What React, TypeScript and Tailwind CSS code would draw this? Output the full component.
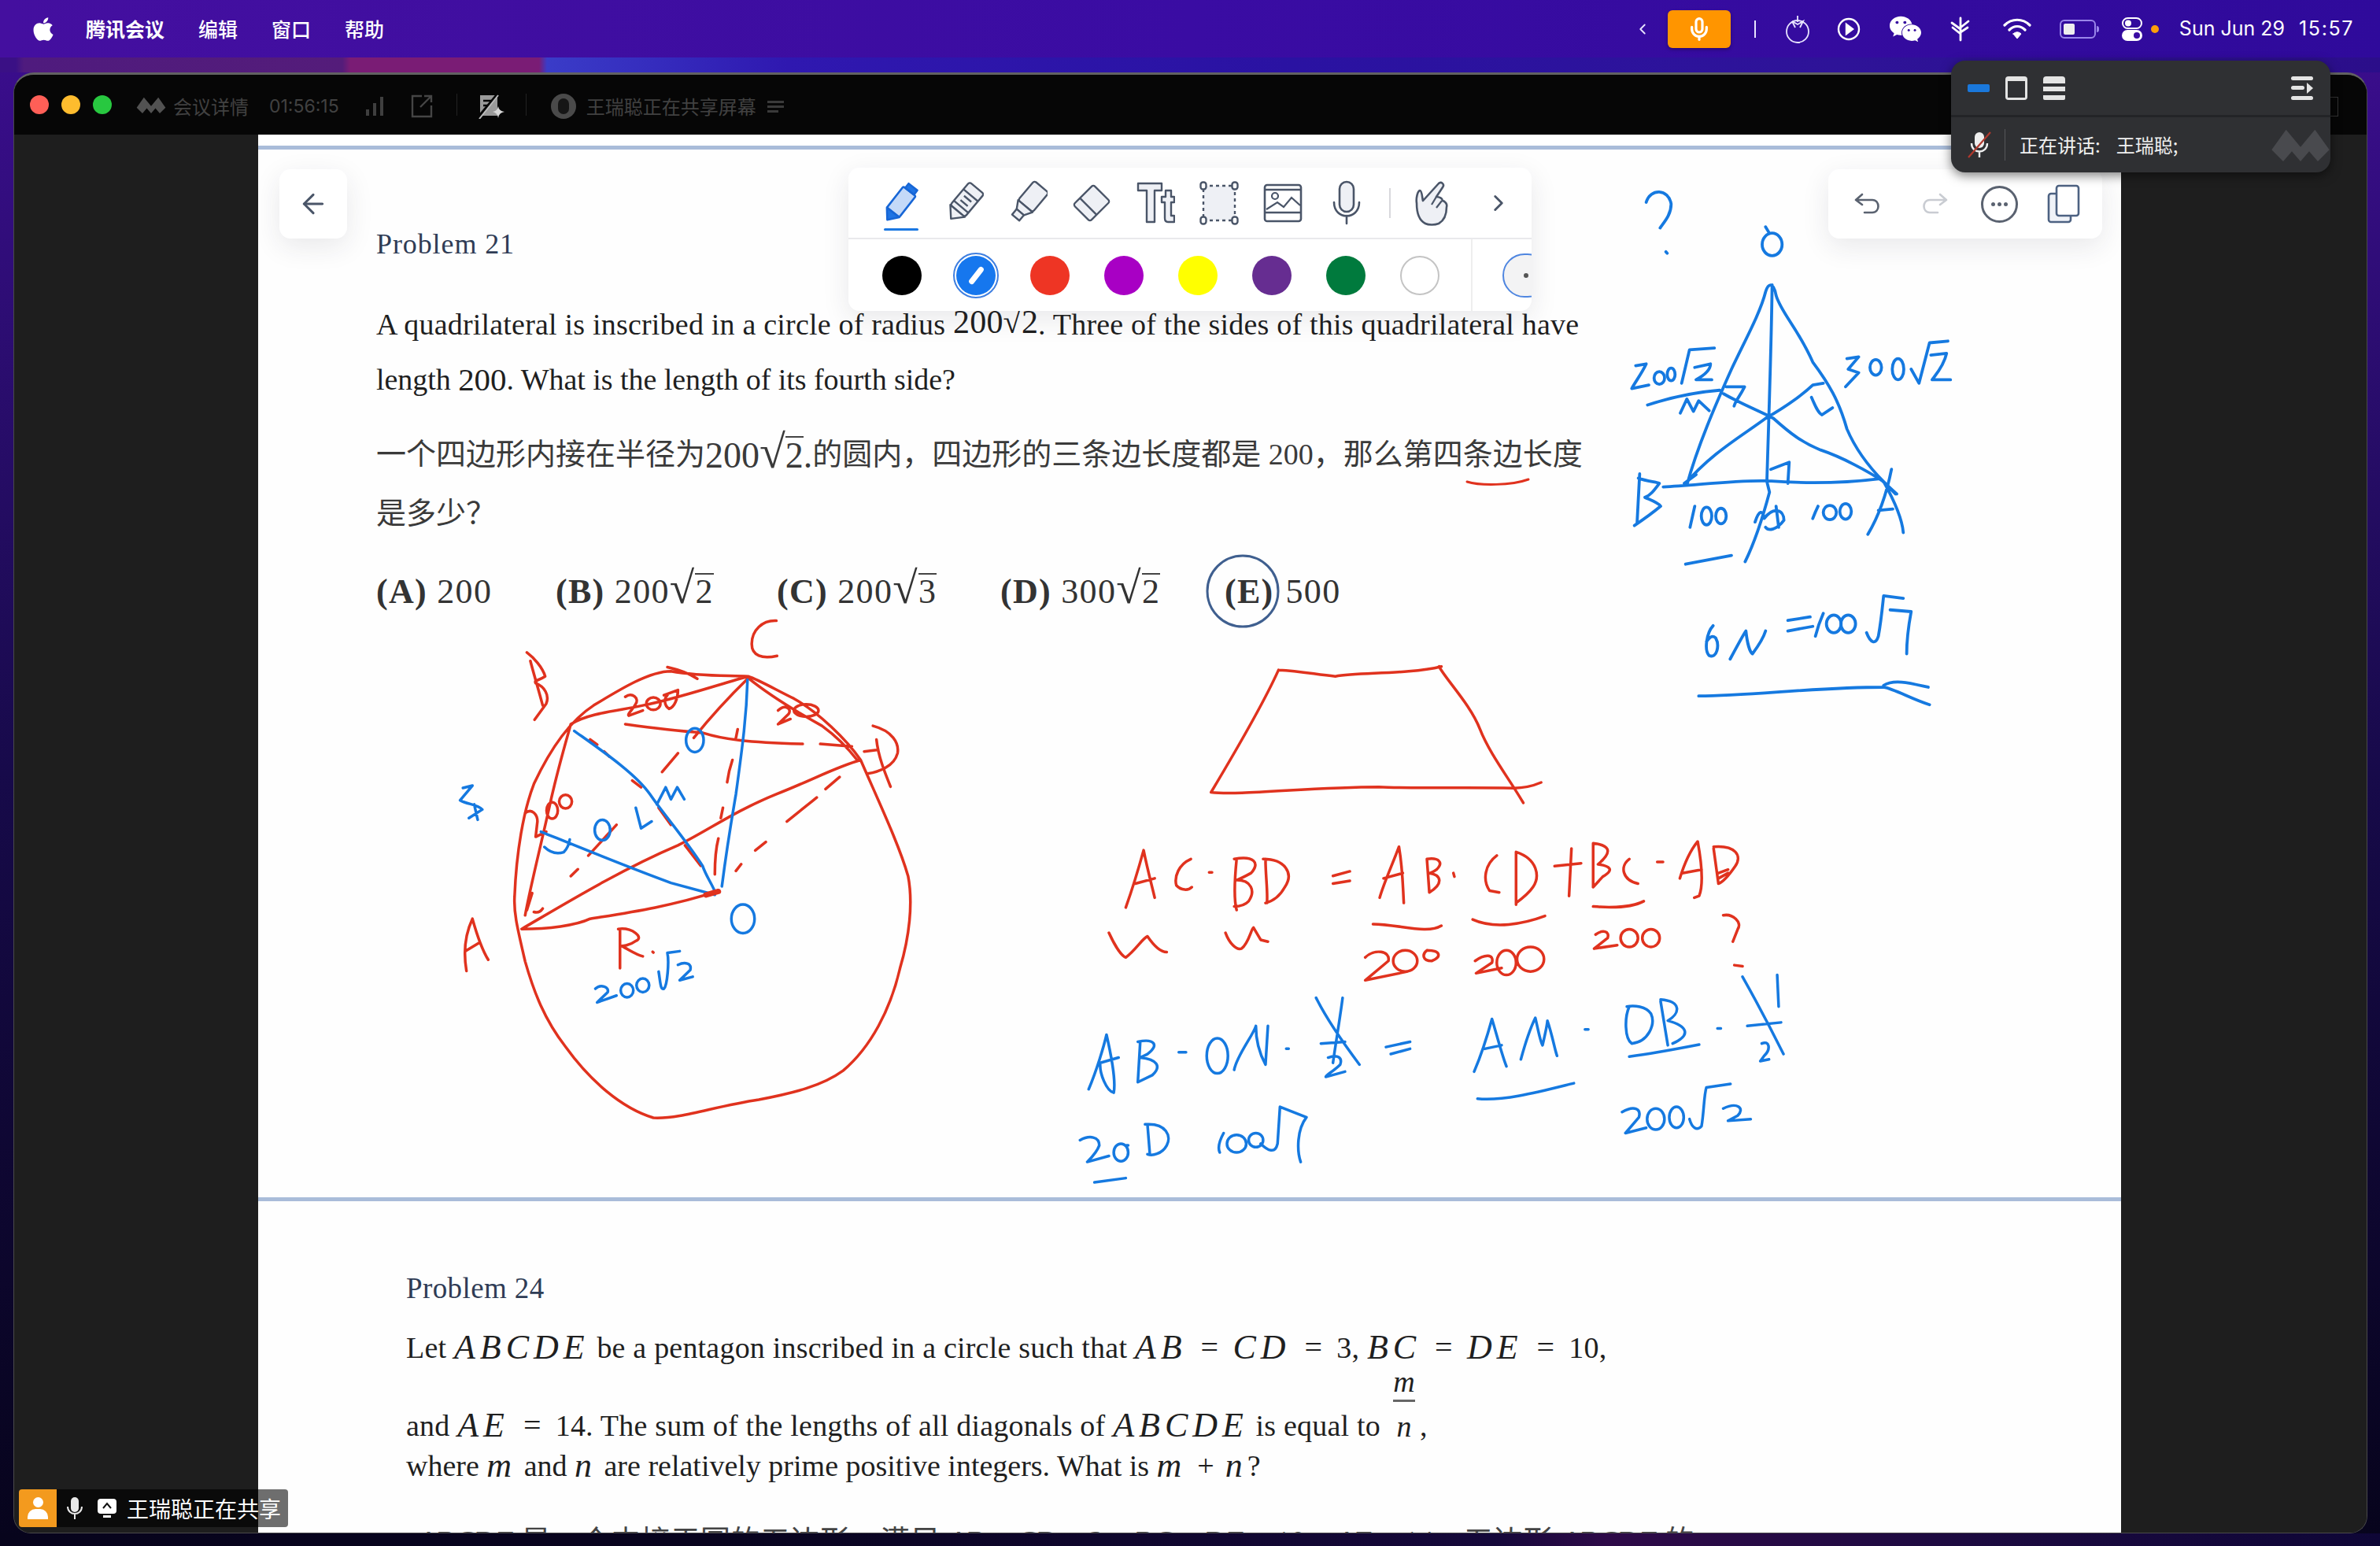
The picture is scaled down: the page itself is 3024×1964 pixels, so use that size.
import React from "react";
import { FaApple, FaWeixin } from "react-icons/fa";
import { Mic, ChevronLeft, ChevronRight, ArrowLeft } from "lucide-react";

const e = (cx: number, cy: number, rx: number, ry: number) =>
  `M${cx - rx} ${cy} A${rx} ${ry} 0 1 1 ${cx + rx} ${cy} A${rx} ${ry} 0 1 1 ${cx - rx} ${cy} `;

const RED = "#e0321e";
const BLUE = "#1579e0";

function Ink({ d, color, w = 3.5 }: { d: string; color: string; w?: number }) {
  return (
    <path
      d={d}
      fill="none"
      stroke={color}
      strokeWidth={w}
      strokeLinecap="round"
      strokeLinejoin="round"
      vectorEffect="non-scaling-stroke"
    />
  );
}

const circleRed =
  "M920 185 C850 182 780 185 700 170 C640 170 560 220 480 270 C420 310 360 390 310 500 C280 580 260 700 255 830 C252 880 265 930 285 1020 C310 1110 340 1190 400 1270 C470 1370 560 1450 650 1478 C730 1482 820 1445 950 1425 C1050 1405 1130 1385 1190 1340 C1270 1270 1325 1160 1352 1040 C1378 950 1390 850 1375 770 C1350 680 1295 560 1240 430 C1200 370 1120 290 1050 250 C1000 225 950 195 920 185 " +
  "M690 158 C720 165 750 175 775 192 " +
  "M275 925 C350 925 430 915 470 895 C560 880 700 860 830 815 " +
  "M275 925 C400 850 560 750 720 680 C800 640 880 580 1000 530 C1100 490 1170 450 1240 430 " +
  "M285 885 C300 800 330 680 360 540 C380 450 400 380 415 325 " +
  "M415 325 C470 290 560 285 620 270 C700 255 800 220 920 185 " +
  "M920 190 C980 240 1060 290 1130 330 C1170 360 1200 390 1230 430 " +
  "M570 325 C640 335 720 345 790 350 C850 370 920 378 1075 383 M1125 383 L1215 390 M1250 405 L1290 400 " +
  "M920 190 C860 250 800 320 765 365 M720 410 L675 465 M890 340 L885 365 M875 430 C865 460 862 480 860 495 M848 570 L842 600 M835 660 C825 700 825 740 825 765 M885 755 L900 735 M940 695 L970 670 M1030 610 L1115 540 M1140 515 L1180 480 M415 770 L435 750 M465 710 L545 620 M470 370 L490 385 M510 405 L525 420 M590 490 L615 510 M665 570 L700 620 M740 680 L785 740 M305 820 L290 870 M310 875 Q325 880 335 865 " +
  "M290 115 C310 130 335 160 342 185 C320 200 310 195 315 205 C340 215 355 240 345 265 L312 312 M300 140 C310 180 325 230 335 270 " +
  "M1000 22 C960 20 930 50 930 90 C930 125 960 135 1002 125 " +
  "M1275 330 C1330 345 1350 380 1345 410 C1335 450 1290 465 1260 470 M1285 370 C1290 420 1310 470 1325 508 " +
  "M118 1048 C110 1000 110 950 135 895 C150 950 165 990 180 1015 M115 990 L155 965 " +
  "M555 925 L555 1040 M550 925 C590 920 625 950 600 960 C580 975 560 975 560 975 C580 985 600 1000 620 1005 M648 992 L650 994 " +
  "M285 585 C305 570 320 590 320 610 L315 655 L345 640 " + e(362, 578, 16, 24) + e(400, 552, 18, 20) +
  "M570 245 C590 230 610 250 600 265 C590 285 575 295 580 300 L620 285 " + e(650, 265, 20, 18) +
  "M680 240 L720 225 C720 250 710 275 695 280 C680 270 680 250 690 240 " +
  "M1005 285 C1025 265 1045 280 1035 295 L1005 325 L1040 310 " + e(1085, 285, 35, 18);

const circleBlue =
  "M108 512 L135 505 L100 548 C120 560 150 560 163 575 L125 600 M140 560 L150 605 " +
  "M425 345 C500 400 600 470 640 530 C680 590 740 660 790 740 C800 770 815 790 825 815 " +
  "M918 195 C915 300 905 380 885 530 C870 620 855 720 845 800 " +
  "M330 640 C450 690 580 745 700 790 L825 825 " +
  "M340 685 C360 705 380 705 395 700 C405 690 410 675 412 663 " +
  e(505, 635, 22, 30) + e(768, 372, 25, 35) +
  "M600 570 L615 630 L645 610 M660 560 L685 510 L700 545 L718 510 L738 545 " +
  e(905, 895, 33, 42) +
  "M485 1100 C500 1085 525 1095 520 1110 L490 1140 L545 1120 " + e(575, 1105, 18, 20) + e(620, 1090, 18, 20) +
  "M665 1050 C670 1080 670 1105 680 1100 C690 1090 695 1020 690 995 L725 990 " +
  "M720 1030 C740 1020 760 1025 755 1045 L725 1075 L762 1065";

const eqRed =
  "M432 72 C480 75 510 85 550 90 C600 78 700 85 770 62 M765 62 C780 100 830 170 850 240 C870 310 910 380 940 450 M432 72 C400 170 340 310 292 420 M292 420 C350 430 500 405 640 405 C700 410 800 405 920 408 C940 408 960 402 977 392 " +
  "M115 748 C130 690 145 620 152 585 C160 640 170 690 175 720 M135 680 L175 665 " +
  "M250 610 C225 625 215 660 220 685 C230 700 245 700 252 690 M288 648 L294 648 " +
  "M345 610 C340 680 340 730 345 755 M340 610 C380 600 395 620 375 650 C355 665 345 670 345 670 C375 670 385 700 370 730 C360 745 345 745 340 745 " +
  "M405 610 C405 660 410 700 408 735 M400 610 C445 610 465 650 445 690 C435 715 420 730 405 735 " +
  "M545 658 L580 645 M545 680 L580 672 " +
  "M642 720 C650 680 670 620 682 575 C690 640 690 690 692 735 M650 665 L690 650 " +
  "M740 610 L745 705 M740 610 C765 605 775 620 760 640 C750 650 745 650 745 650 C770 655 775 680 745 705 M795 650 L797 660 " +
  "M885 600 C860 625 855 670 870 700 L890 705 M925 590 C925 650 925 700 925 740 M925 590 C970 610 975 660 960 690 C950 710 935 725 925 735 " +
  "M1005 630 L1060 622 M1040 580 L1035 715 " +
  "M1085 565 L1085 690 M1085 565 C1115 570 1130 585 1095 625 C1120 630 1130 640 1105 660 L1085 690 M1160 610 C1140 630 1145 670 1178 680 M1218 618 L1230 618 " +
  "M1265 665 C1275 620 1290 580 1302 560 C1310 620 1315 680 1305 715 L1295 720 M1270 650 L1310 640 " +
  "M1335 580 L1345 680 M1335 575 C1380 570 1395 600 1380 630 C1370 650 1355 675 1345 680 M1345 650 L1365 640 M1345 665 L1365 650 " +
  "M628 795 C680 795 740 825 770 800 M835 782 C880 810 940 795 985 772 M1085 745 C1130 750 1170 745 1190 730 " +
  "M80 820 C90 850 105 885 115 890 C135 870 150 835 160 830 C170 850 185 875 200 875 M322 820 C330 850 345 870 355 865 C370 850 375 810 380 805 L395 840 L410 845 " +
  "M612 890 C630 865 665 870 660 900 L612 955 L700 930 " + e(695, 900, 25, 30) + "M740 870 C770 870 770 890 750 900 C730 900 730 880 740 870 " +
  "M840 900 C860 880 880 880 875 905 L842 935 L895 920 " + e(905, 905, 20, 35) + e(955, 895, 28, 35) +
  "M1090 825 C1105 810 1120 815 1115 835 L1087 865 L1135 855 " + e(1160, 835, 18, 25) + e(1205, 835, 18, 25) +
  "M1355 770 C1375 765 1395 790 1385 810 L1375 845 M1378 912 L1395 915";

const eqBlue =
  "M38 1265 C55 1210 70 1140 75 1110 C85 1170 95 1240 90 1275 C75 1270 60 1220 62 1190 L100 1175 " +
  "M145 1130 L140 1245 M140 1130 C175 1120 185 1140 160 1165 L145 1175 C180 1180 190 1200 170 1225 L140 1245 M225 1160 L240 1160 " +
  e(305, 1170, 22, 50) + "M340 1210 C345 1170 380 1110 385 1085 C385 1130 395 1170 405 1195 L410 1085 M448 1150 L453 1150 " +
  "M510 1005 C530 1060 570 1140 600 1195 M565 1005 C560 1060 550 1140 545 1190 M520 1135 L570 1130 M535 1175 C555 1165 565 1175 560 1195 C545 1215 530 1225 530 1230 L570 1215 " +
  "M655 1145 L705 1130 M665 1165 L705 1150 " +
  "M838 1215 C855 1160 870 1090 875 1065 C885 1110 895 1165 905 1200 M860 1150 L895 1140 " +
  "M935 1180 C945 1130 955 1090 965 1062 C970 1090 975 1130 980 1140 C985 1110 990 1080 990 1070 C1000 1110 1005 1150 1010 1170 M1068 1095 L1075 1095 " +
  "M845 1292 C900 1300 980 1270 1045 1248 " +
  "M1160 1030 C1150 1060 1150 1120 1165 1135 C1200 1130 1215 1080 1205 1050 C1195 1030 1170 1025 1155 1030 " +
  "M1225 1015 L1240 1140 M1225 1010 C1270 1015 1265 1050 1240 1070 C1280 1085 1290 1110 1250 1135 M1160 1172 C1200 1165 1260 1150 1305 1138 M1343 1092 L1350 1092 " +
  "M1467 940 L1470 1030 M1405 1085 L1475 1075 M1395 945 C1430 1030 1460 1110 1480 1165 M1435 1135 C1450 1125 1455 1150 1440 1170 L1432 1185 L1450 1180 " +
  "M20 1410 C40 1395 60 1400 60 1425 C55 1445 40 1465 35 1472 L80 1455 " + e(105, 1445, 15, 25) + "M116 1425 L120 1425 " +
  "M160 1365 L165 1450 M155 1365 C200 1360 210 1400 200 1425 C190 1450 170 1455 160 1450 M50 1530 L115 1518 " +
  "M318 1390 C310 1410 305 1430 310 1445 " + e(345, 1420, 20, 25) + e(385, 1410, 15, 20) +
  "M395 1420 C410 1440 425 1450 430 1420 L435 1315 L490 1345 C470 1380 470 1440 478 1472 " +
  "M1145 1330 C1170 1310 1185 1320 1180 1345 L1152 1390 L1195 1375 " + e(1215, 1350, 18, 30) + e(1258, 1345, 15, 30) +
  "M1285 1350 C1290 1375 1300 1385 1310 1370 C1315 1330 1315 1280 1320 1260 L1370 1250 M1355 1320 C1385 1300 1400 1320 1385 1340 L1365 1355 L1412 1350";

const triBlue =
  "M155 85 C170 45 240 45 250 90 C250 120 225 140 208 158 M230 226 L235 230 " +
  e(635, 205, 38, 32) + "M610 155 L622 170 " +
  "M310 890 C350 780 420 660 480 560 C530 480 590 400 610 340 C620 315 640 310 650 350 C670 400 730 440 790 540 C850 600 890 650 920 730 C960 800 1020 850 1060 880 C1090 920 1130 980 1135 1025 " +
  "M220 895 C350 890 500 875 620 878 C750 885 900 885 1040 872 " +
  "M635 320 C632 500 622 700 615 880 L625 910 C600 980 570 1050 532 1108 " +
  "M450 630 C520 660 590 680 640 700 C700 740 750 770 820 790 C900 810 1000 850 1060 880 C1080 895 1095 905 1110 915 " +
  "M300 890 C400 800 520 750 610 700 C680 670 740 640 790 605 L830 600 M300 885 L345 860 " +
  "M460 610 L530 610 C510 640 495 650 490 665 M785 640 C800 665 810 685 825 690 L865 670 M630 845 L700 825 L695 885 " +
  "M115 550 L155 545 C140 570 110 600 100 615 L165 605 " + e(205, 585, 20, 18) + e(250, 575, 15, 18) +
  "M290 600 L320 505 L415 500 M340 555 L400 545 C400 565 370 580 345 590 L405 590 M160 662 C250 640 350 625 435 620 M285 685 L310 645 L335 680 L355 650 L395 678 " +
  "M920 530 L965 525 L925 560 L965 570 L915 610 " + e(1030, 555, 22, 22) + e(1115, 560, 22, 30) +
  "M1165 560 L1195 600 L1235 485 L1305 480 M1240 520 L1300 515 C1290 550 1260 575 1245 590 L1315 590 " +
  "M130 858 L120 1000 M125 870 C160 880 190 880 205 885 C185 905 170 920 150 925 C180 935 200 940 210 950 C170 975 140 990 110 1005 " +
  "M1000 1030 C1040 980 1070 920 1090 845 M1040 962 L1095 958 M1045 870 L1105 915 " +
  "M340 950 L322 1010 " + e(385, 978, 20, 25) + e(440, 978, 20, 22) +
  "M810 950 C800 965 795 975 790 985 " + e(855, 968, 25, 20) + e(915, 965, 22, 22) +
  "M570 995 C585 960 600 960 605 985 C640 950 680 960 680 990 C650 1020 620 1020 610 1010 M650 950 L660 1010 M305 1115 L480 1090 " +
  "M410 1290 C385 1310 375 1360 395 1375 C425 1385 435 1345 420 1325 C405 1315 395 1325 385 1335 " +
  "M475 1385 C500 1350 530 1310 535 1305 C540 1340 550 1365 560 1370 C580 1350 600 1330 610 1305 " +
  "M695 1275 L780 1265 M695 1305 L790 1292 M830 1255 C815 1280 805 1305 800 1320 " + e(870, 1285, 28, 25) + e(925, 1285, 28, 25) +
  "M995 1310 C1010 1340 1030 1345 1040 1320 C1050 1280 1055 1240 1060 1205 L1135 1212 M1085 1245 L1165 1250 C1155 1290 1148 1330 1148 1370 " +
  "M355 1490 C550 1490 800 1465 1060 1465 C1100 1470 1170 1500 1235 1515 M1060 1460 C1100 1440 1170 1455 1230 1465";

function Annotations() {
  return (
    <svg className="absolute inset-0 w-full h-full pointer-events-none" viewBox="328 172 2367 1776">
      <g transform="translate(540 780) scale(0.4464 0.4337)">
        <Ink d={circleRed} color={RED} />
        <Ink d={circleBlue} color={BLUE} />
        <Ink d="M800 825 L835 815" color={RED} w={7} />
      </g>
      <g transform="translate(1360 820) scale(0.6122 0.4464)">
        <Ink d={eqRed} color={RED} />
        <Ink d={eqBlue} color={BLUE} />
      </g>
      <g transform="translate(2040 220) scale(0.3333 0.4464)">
        <Ink d={triBlue} color={BLUE} w={3.8} />
      </g>
      <path d="M1864 613 C1880 618 1920 618 1942 610" fill="none" stroke={RED} strokeWidth="3" strokeLinecap="round" />
      <circle cx="1579" cy="752" r="45" fill="none" stroke="#3f5f8f" strokeWidth="3" />
    </svg>
  );
}

function Sqrt({ n, bar = true }: { n: string; bar?: boolean }) {
  return (
    <span className="inline-flex items-baseline">
      <span className={bar ? "text-[1.3em] leading-none" : ""}>√</span>
      <span className={bar ? "border-t-2 border-[#444] leading-[1.02em]" : ""}>{n}</span>
    </span>
  );
}

const V = ({ children }: { children: React.ReactNode }) => <i className="text-[44px] tracking-[6px] leading-none">{children}</i>;
const Eq = () => <span className="mx-[18px] text-[40px] leading-none">=</span>;

function TitleLogo({ className, fill }: { className: string; fill: string }) {
  return (
    <svg viewBox="0 0 40 24" className={className}>
      <path d="M0 16 L10 2 L20 14 L30 2 L40 16 L32 24 L26 17 L20 24 L14 17 L8 24 Z" fill={fill} />
    </svg>
  );
}

const G = "#4a5568";
const IC = "#eef0f5";

function ToolPen() {
  return (
    <svg width="50" height="60" viewBox="0 0 50 60">
      <g transform="rotate(38 25 30)" stroke="#1766d6" strokeWidth="2.6" fill="#c4d9f8" strokeLinejoin="round">
        <rect x="15" y="11" width="20" height="34" rx="2" />
        <path d="M18 4 h14 v7 h-14z" fill="#1f74e4" />
        <path d="M15 45 h20 l-10 12z" fill="#1f74e4" />
      </g>
    </svg>
  );
}
function ToolMarker() {
  return (
    <svg width="50" height="60" viewBox="0 0 50 60">
      <g transform="rotate(40 25 30)" stroke={G} strokeWidth="2.4" fill={IC} strokeLinejoin="round">
        <rect x="13" y="5" width="24" height="38" rx="3" />
        <path d="M13 17h24M19 23h12M19 30h12M13 36h24" fill="none" />
        <path d="M13 43 h24 l-12 13z" />
      </g>
    </svg>
  );
}
function ToolHighlighter() {
  return (
    <svg width="50" height="60" viewBox="0 0 50 60">
      <g transform="rotate(40 25 30)" stroke={G} strokeWidth="2.4" fill={IC} strokeLinejoin="round">
        <rect x="13" y="3" width="24" height="32" rx="3" />
        <path d="M13 35 h24 l-6 10 h-12z" />
        <path d="M19 45 h12 v9 h-12z" />
      </g>
    </svg>
  );
}
function ToolEraser() {
  return (
    <svg width="50" height="60" viewBox="0 0 50 60">
      <g transform="rotate(45 25 30)" stroke={G} strokeWidth="2.4" fill={IC} strokeLinejoin="round">
        <rect x="10" y="12" width="30" height="36" rx="3" />
        <path d="M10 36h30" fill="none" />
      </g>
    </svg>
  );
}
function ToolText() {
  return (
    <svg width="50" height="60" viewBox="0 0 50 60">
      <g stroke={G} strokeWidth="2.4" fill={IC} strokeLinejoin="round">
        <path d="M3 5 h30 v9 h-9 v40 h-10 v-40 h-11z" />
        <path d="M33 22 h5 v-8 h7 v8 h4 v7 h-4 v17 h4 v8 h-8 q-4 0 -4 -5 v-20 h-4z" />
      </g>
    </svg>
  );
}
function ToolSelect() {
  return (
    <svg width="50" height="60" viewBox="0 0 50 60">
      <rect x="5" y="8" width="40" height="44" fill={IC} stroke={G} strokeWidth="2.4" strokeDasharray="4 4" />
      {[[5, 8], [45, 8], [5, 52], [45, 52]].map(([x, y]) => (
        <rect key={`${x}-${y}`} x={x - 3.5} y={y - 4.5} width="7" height="9" rx="3" fill="#fff" stroke={G} strokeWidth="2.4" />
      ))}
    </svg>
  );
}
function ToolImage() {
  return (
    <svg width="50" height="60" viewBox="0 0 50 60">
      <rect x="2" y="7" width="46" height="46" rx="3" fill="#fff" stroke={G} strokeWidth="2.6" />
      <path d="M2 13h46M2 42h46" stroke={G} strokeWidth="2.4" fill="none" />
      <circle cx="15" cy="21" r="4" fill="none" stroke={G} strokeWidth="2.2" />
      <path d="M4 38 L18 29 L26 35 L36 23 L47 33" fill="none" stroke={G} strokeWidth="2.2" />
    </svg>
  );
}
function ToolMic() {
  return (
    <svg width="50" height="60" viewBox="0 0 50 60">
      <rect x="16" y="3" width="18" height="38" rx="9" fill={IC} stroke={G} strokeWidth="2.6" />
      <path d="M9 29 C9 52 41 52 41 29 M25 46 V56" fill="none" stroke={G} strokeWidth="2.6" strokeLinecap="round" />
    </svg>
  );
}
function ToolHand() {
  return (
    <svg width="50" height="60" viewBox="0 0 50 60">
      <path
        d="M16 56 C8 52 5 42 5 30 C4 24 6 15 9 14 C12 14 12 24 13 27 L33 5 C36 2 41 6 38 10 L30 22 C34 22 38 24 38 27 C42 28 44 32 43 35 C43 44 40 52 33 56 C28 58 20 58 16 56 Z"
        fill={IC}
        stroke={G}
        strokeWidth="2.6"
        strokeLinejoin="round"
      />
      <path d="M24 32 L30 22 M30 36 L37 27" fill="none" stroke={G} strokeWidth="2.2" />
    </svg>
  );
}

function ColorDot({ color, ring }: { color: string; ring?: boolean }) {
  return <div className={`w-[50px] h-[50px] rounded-full shrink-0 ${color} ${ring ? "border-2 border-[#c4c4c4]" : ""}`} />;
}

function DrawToolbar() {
  return (
    <div className="absolute left-[1078px] top-[213px] w-[868px] h-[182px] rounded-[14px] bg-white shadow-[0_10px_34px_rgba(40,40,60,0.10)] overflow-hidden z-10">
      <div className="h-[91px] flex items-center pl-[41px] border-b-2 border-[#e9e9ec] relative">
        <div className="flex items-center gap-[31px]">
          <ToolPen />
          <ToolMarker />
          <ToolHighlighter />
          <ToolEraser />
          <ToolText />
          <ToolSelect />
          <ToolImage />
          <ToolMic />
        </div>
        <div className="w-[2px] h-[38px] bg-[#d8d8dc] ml-[29px]" />
        <div className="ml-[28px]">
          <ToolHand />
        </div>
        <ChevronRight size={34} strokeWidth={2} className="ml-[42px] text-[#4a5568]" />
        <div className="absolute left-[45px] top-[77px] w-[44px] h-[3px] rounded-full bg-[#1b78e2]" />
      </div>
      <div className="h-[91px] flex items-center pl-[43px] gap-[44px]">
        <ColorDot color="bg-black" />
        <div className="w-[50px] h-[50px] shrink-0 rounded-full bg-[#1677ee] flex items-center justify-center outline-2 outline-offset-[2px] outline-[#3f7fe0]">
          <div className="w-[7px] h-[26px] rounded-full bg-white rotate-[38deg]" />
        </div>
        <ColorDot color="bg-[#ee3524]" />
        <ColorDot color="bg-[#a800c4]" />
        <ColorDot color="bg-[#ffff00]" />
        <ColorDot color="bg-[#662d91]" />
        <ColorDot color="bg-[#007a3d]" />
        <ColorDot color="bg-white" ring />
        <div className="w-[2px] h-[91px] bg-[#eeeeee] shrink-0 -ml-[4px]" />
        <div className="w-[60px] h-[56px] -ml-[6px] shrink-0 rounded-full bg-[#f3f3f4] border-2 border-[#4f86e0] flex items-center justify-center">
          <div className="w-[6px] h-[6px] rounded-full bg-[#555]" />
        </div>
      </div>
    </div>
  );
}

function RightToolbar() {
  return (
    <div className="absolute left-[2323px] top-[215px] w-[348px] h-[88px] rounded-[14px] bg-white shadow-[0_10px_34px_rgba(40,40,60,0.10)] z-10 flex items-center pl-[32px]">
      <svg width="36" height="30" viewBox="0 0 36 30" fill="none" stroke="#5a6270" strokeWidth="2.6" strokeLinecap="round" strokeLinejoin="round">
        <path d="M11 3 L3 10 L11 16 M3 10 H24 C34 10 34 26 24 26 H14" />
      </svg>
      <svg className="ml-[49px]" width="36" height="30" viewBox="0 0 36 30" fill="none" stroke="#c9ccd2" strokeWidth="2.6" strokeLinecap="round" strokeLinejoin="round">
        <path d="M25 3 L33 10 L25 16 M33 10 H12 C2 10 2 26 12 26 H22" />
      </svg>
      <div className="ml-[41px] w-[47px] h-[47px] rounded-full border-[3px] border-[#5a6270] flex items-center justify-center gap-[3px]">
        <i className="w-[5px] h-[5px] rounded-full bg-[#5a6270]" />
        <i className="w-[5px] h-[5px] rounded-full bg-[#5a6270]" />
        <i className="w-[5px] h-[5px] rounded-full bg-[#5a6270]" />
      </div>
      <svg className="ml-[37px]" width="42" height="50" viewBox="0 0 42 50" fill="#f0f3f8" stroke="#4d6282" strokeWidth="2.6" strokeLinejoin="round">
        <rect x="2" y="12" width="28" height="36" rx="3" />
        <rect x="12" y="2" width="28" height="38" rx="3" fill="#fff" />
      </svg>
    </div>
  );
}

function Popover() {
  return (
    <div className="absolute left-[2479px] top-[77px] w-[482px] h-[142px] rounded-[18px] bg-[#2f3033] shadow-[0_4px_14px_rgba(0,0,0,0.5)] z-20 overflow-hidden">
      <div className="h-[72px] border-b-[3px] border-[#232427] flex items-center pl-[21px] pr-[22px]">
        <div className="w-[28px] h-[10px] rounded-[2px] bg-[#1a78dc]" />
        <div className="ml-[20px] w-[28px] h-[30px] rounded-[4px] bg-[#e4e4e4] pt-[6px] px-[3px] pb-[3px]">
          <div className="w-full h-full bg-[#2f3033]" />
        </div>
        <div className="ml-[20px] w-[28px] h-[30px] flex flex-col justify-between">
          <div className="h-[9px] rounded-t-[4px] bg-[#e4e4e4]" />
          <div className="h-[6px] bg-[#e4e4e4]" />
          <div className="h-[6px] rounded-b-[2px] bg-[#e4e4e4]" />
        </div>
        <div className="ml-auto w-[28px] h-[30px] flex flex-col justify-between relative">
          <div className="h-[5px] rounded bg-[#e4e4e4]" />
          <div className="h-[5px] w-[17px] rounded bg-[#e4e4e4]" />
          <div className="h-[5px] rounded bg-[#e4e4e4]" />
          <div className="absolute right-0 top-[8px] w-0 h-0 border-y-[7px] border-y-transparent border-l-[8px] border-l-[#e4e4e4]" />
        </div>
      </div>
      <div className="h-[70px] flex items-center relative">
        <svg className="ml-[20px]" width="32" height="34" viewBox="0 0 32 34">
          <rect x="10" y="1" width="12" height="20" rx="6" fill="#eee" />
          <path d="M6 15 C6 29 26 29 26 15 M16 25 V33" fill="none" stroke="#eee" strokeWidth="2.4" />
          <path d="M2 33 L30 1" stroke="#b0392e" strokeWidth="2.2" />
        </svg>
        <div className="ml-[16px] w-[1px] h-[40px] bg-[#55565a]" />
        <span className="ml-[18px] text-[24px] text-[#f0f0f0] whitespace-nowrap" style={{ fontFamily: '"Noto Sans CJK SC", sans-serif' }}>
          正在讲话:
        </span>
        <span className="ml-[20px] text-[24px] text-[#f0f0f0] whitespace-nowrap" style={{ fontFamily: '"Noto Sans CJK SC", sans-serif' }}>
          王瑞聪;
        </span>
        <TitleLogo className="absolute right-[0px] top-[12px] w-[76px] h-[44px]" fill="#494a4e" />
      </div>
    </div>
  );
}

function MenuBar() {
  return (
    <div className="h-[73px] flex items-center text-white bg-gradient-to-r from-[#440f9f] via-[#3a0ca3] to-[#2f0a9b]" style={{ fontFamily: '"Noto Sans CJK SC", sans-serif' }}>
      <FaApple className="ml-[38px] text-[34px]" />
      <span className="ml-[37px] text-[25px] font-bold leading-none">腾讯会议</span>
      <span className="ml-[43px] text-[25px] font-medium leading-none">编辑</span>
      <span className="ml-[43px] text-[25px] font-medium leading-none">窗口</span>
      <span className="ml-[43px] text-[25px] font-medium leading-none">帮助</span>
      <ChevronLeft size={22} strokeWidth={2} className="ml-auto text-[#e8e4ff]" />
      <div className="ml-[21px] w-[80px] h-[48px] rounded-[6px] bg-[#ff9500] flex items-center justify-center shadow-[0_2px_4px_rgba(0,0,0,0.3)]">
        <Mic size={32} strokeWidth={2.4} />
      </div>
      <div className="ml-[30px] w-[2px] h-[22px] bg-[#e8e4ff]" />
      <svg className="ml-[37px]" width="32" height="36" viewBox="0 0 32 36" fill="none" stroke="#e8e4ff" strokeWidth="1.8">
        <circle cx="16" cy="21" r="14" />
        <path d="M16 1 V9 M9 8 L16 12 L23 8 L19 16 M13 16 L9 8" />
      </svg>
      <svg className="ml-[34px]" width="30" height="30" viewBox="0 0 30 30" fill="none" stroke="#fff" strokeWidth="2.4">
        <circle cx="15" cy="15" r="13" />
        <path d="M12 9 L20 15 L12 21 Z" fill="#fff" />
      </svg>
      <FaWeixin className="ml-[36px] text-[42px]" />
      <svg className="ml-[36px]" width="26" height="32" viewBox="0 0 26 32" fill="none" stroke="#fff" strokeWidth="2.8" strokeLinecap="round">
        <path d="M13 2 V30 M13 16 L2 8 M13 22 L3 14 M13 14 L23 6 M13 20 L22 14" />
      </svg>
      <svg className="ml-[41px]" width="36" height="28" viewBox="0 0 36 28" fill="none" stroke="#fff" strokeWidth="3.2" strokeLinecap="round">
        <path d="M2 9 C11 0 25 0 34 9 M8 15 C14 9 22 9 28 15" />
        <path d="M13 20 L18 26 L23 20 C20 17 16 17 13 20Z" fill="#fff" strokeWidth="1" />
      </svg>
      <div className="ml-[36px] w-[46px] h-[24px] rounded-[6px] border-2 border-[#9a86ea] p-[3px]">
        <div className="w-[14px] h-full rounded-[2px] bg-[#eee]" />
      </div>
      <div className="w-[3px] h-[8px] ml-[1px] bg-[#9a86ea] rounded-r" />
      <svg className="ml-[28px]" width="28" height="30" viewBox="0 0 28 30">
        <rect x="2" y="1" width="24" height="13" rx="6.5" fill="none" stroke="#fff" strokeWidth="2" />
        <circle cx="9" cy="7.5" r="4" fill="#fff" />
        <rect x="1" y="16" width="26" height="14" rx="7" fill="#fff" />
        <circle cx="20" cy="23" r="4" fill="#3a0ca3" />
      </svg>
      <div className="ml-[10px] w-[10px] h-[10px] rounded-full bg-[#ff9f0a]" />
      <span className="ml-[26px] text-[25px] leading-none whitespace-nowrap" style={{ fontFamily: "Inter, sans-serif" }}>
        Sun Jun 29
      </span>
      <span className="ml-[18px] mr-[33px] text-[25px] tracking-[1.6px] leading-none whitespace-nowrap" style={{ fontFamily: "Inter, sans-serif" }}>
        15:57
      </span>
    </div>
  );
}

function TitleBar() {
  return (
    <div className="h-[77px] flex items-center bg-[#060606] text-[#414141] text-[24px] relative" style={{ fontFamily: '"Noto Sans CJK SC", sans-serif' }}>
      <div className="ml-[20px] w-[24px] h-[24px] rounded-full bg-[#ff5f57]" />
      <div className="ml-[16px] w-[24px] h-[24px] rounded-full bg-[#febc2e]" />
      <div className="ml-[16px] w-[24px] h-[24px] rounded-full bg-[#28c840]" />
      <TitleLogo className="ml-[30px] w-[40px] h-[22px]" fill="#525252" />
      <span className="ml-[8px] pt-[4px] whitespace-nowrap">会议详情</span>
      <span className="ml-[26px] pt-[4px] text-[23px] whitespace-nowrap" style={{ fontFamily: "Inter, sans-serif" }}>
        01:56:15
      </span>
      <div className="ml-[34px] mt-[4px] flex items-end gap-[5px] h-[24px]">
        <div className="w-[4px] h-[8px] bg-[#3f3f3f]" />
        <div className="w-[4px] h-[16px] bg-[#3f3f3f]" />
        <div className="w-[4px] h-[24px] bg-[#3f3f3f]" />
      </div>
      <svg className="ml-[35px] mt-[4px]" width="28" height="30" viewBox="0 0 28 30" fill="none" stroke="#454545" strokeWidth="2.4">
        <path d="M14 2 H2 V28 H26 V14 M12 16 L25 3 M17 2 H26 V10" />
      </svg>
      <div className="ml-[30px] w-[1px] h-[28px] bg-[#222]" />
      <svg className="ml-[26px] mt-[4px]" width="36" height="32" viewBox="0 0 36 32">
        <path d="M3 2 H25 V28 H3 Z" fill="#9a9a9a" />
        <path d="M7 9 H20 M7 15 H14" stroke="#060606" strokeWidth="2.4" />
        <path d="M0 31 L26 0" stroke="#060606" strokeWidth="4" />
        <path d="M2 32 L26 2" stroke="#bdbdbd" strokeWidth="2" />
        <path d="M26 16 Q27 22 34 23 Q27 24 26 31 Q25 24 19 23 Q25 22 26 16Z" fill="#d8d8d8" />
      </svg>
      <div className="ml-[25px] w-[1px] h-[28px] bg-[#222]" />
      <div className="ml-[31px] mt-[4px] w-[32px] h-[32px] rounded-full bg-[#4a4a4a] flex items-center justify-center">
        <div className="w-[14px] h-[20px] rounded-full bg-[#161616]" />
      </div>
      <span className="ml-[13px] pt-[4px] whitespace-nowrap">王瑞聪正在共享屏幕</span>
      <div className="ml-[14px] mt-[4px] w-[21px] flex flex-col gap-[3px]">
        <div className="h-[3px] bg-[#3a3a3a]" />
        <div className="h-[3px] bg-[#3a3a3a]" />
        <div className="h-[3px] w-[14px] bg-[#3a3a3a]" />
      </div>
      <div className="absolute left-[2933px] top-[28px] w-[20px] h-[25px] border border-[#333]" />
    </div>
  );
}

const LINE = "flex items-center whitespace-pre";
const BODY = "text-[38px] tracking-[0.2px]";

function Doc() {
  const cjk = '"Liberation Serif", "Noto Sans CJK SC", serif';
  return (
    <div className="w-[2367px] bg-[#fefefe] relative overflow-hidden text-[#1f1f1f]" style={{ fontFamily: cjk }}>
      <div className="h-[14px] bg-white" />
      <div className="h-[5px] bg-[#a9bcd9]" />
      <section className="h-[1331px] pl-[150px] flex flex-col">
        <div className={`${LINE} mt-[100px] h-[40px] shrink-0 text-[36px] tracking-[0.9px] text-[#2f3c55]`}>Problem 21</div>
        <div className={`${LINE} mt-[60px] h-[44px] shrink-0 ${BODY}`}>
          A quadrilateral is inscribed in a circle of radius <span className="text-[42px] leading-none -mt-[6px]">200</span>
          <span className="text-[42px] leading-none -mt-[6px]"><Sqrt n="2" bar={false} /></span>. Three of the sides of this quadrilateral have
        </div>
        <div className={`${LINE} mt-[26px] h-[44px] shrink-0 text-[38px] tracking-[-0.05px]`}>
          length <span className="text-[41px] leading-none">200</span>. What is the length of its fourth side?
        </div>
        <div className={`${LINE} mt-[51px] h-[44px] shrink-0 text-[38px] text-[#3a3a3a]`}>
          一个四边形内接在半径为<span className="flex items-baseline text-[46px] leading-none -mt-[4px]">200<Sqrt n="2" />.</span>的圆内，四边形的三条边长度都是 200，那么第四条边长度
        </div>
        <div className={`${LINE} mt-[31px] h-[44px] shrink-0 text-[38px] text-[#3a3a3a]`}>是多少？</div>
        <div className="mt-[44px] h-[60px] shrink-0 grid grid-cols-[228px_281px_284px_285px_auto] items-center text-[44px] tracking-[1.3px] text-[#333] whitespace-pre">
          <div><b>(A)</b> 200</div>
          <div className="flex items-baseline"><b>(B)</b> 200<Sqrt n="2" /></div>
          <div className="flex items-baseline"><b>(C)</b> 200<Sqrt n="3" /></div>
          <div className="flex items-baseline"><b>(D)</b> 300<Sqrt n="2" /></div>
          <div className="flex items-baseline"><b>(E)</b><span className="ml-[15px]">500</span></div>
        </div>
      </section>
      <div className="h-[5px] bg-[#a9bcd9]" />
      <section className="pl-[188px] flex flex-col">
        <div className={`${LINE} mt-[91px] h-[40px] shrink-0 text-[37px] tracking-[0.4px] text-[#2f3c55]`}>Problem 24</div>
        <div className={`${LINE} mt-[33px] h-[44px] shrink-0 ${BODY}`}>
          Let <V>ABCDE</V> be a pentagon inscribed in a circle such that <V>AB</V><Eq /><V>CD</V><Eq />3, <V>BC</V><Eq /><V>DE</V><Eq />10,
        </div>
        <div className={`flex items-end whitespace-pre mt-[55px] h-[44px] shrink-0 ${BODY}`}>
          <span className="flex items-center h-[44px]">
            and <V>AE</V><Eq />14. The sum of the lengths of all diagonals of <V>ABCDE</V> is equal to
          </span>
          <div className="ml-[16px] mb-[8px] flex flex-col items-center leading-none">
            <i className="h-[32px]">m</i>
            <div className="w-[28px] h-[3px] bg-[#666] mt-[10px] mb-[12px]" />
            <i className="h-[32px]">n</i>
          </div>
          <span className="ml-[6px] h-[44px] flex items-center">,</span>
        </div>
        <div className={`${LINE} mt-[7px] h-[44px] shrink-0 text-[38px]`}>
          where <V>m</V> and <V>n</V> are relatively prime positive integers. What is <V>m</V><span className="mx-[14px]">+</span><V>n</V>?
        </div>
        <div className={`${LINE} mt-[52px] h-[44px] shrink-0 ml-[14px] text-[38px] text-[#444]`}>
          <i>ABCDE</i> 是一个内接于圆的五边形，满足 <i>AB</i> = <i>CD</i> = 3，<i>BC</i> = <i>DE</i> = 10，<i>AE</i> = 14，五边形 <i>ABCDE</i> 的
        </div>
      </section>
      <Annotations />
    </div>
  );
}

function Badge() {
  return (
    <div className="absolute left-[24px] top-[1892px] h-[48px] flex rounded-[4px] overflow-hidden text-white z-10">
      <div className="w-[48px] bg-[#f39a1e] flex flex-col items-center justify-center">
        <div className="w-[13px] h-[13px] rounded-full bg-white" />
        <div className="w-[26px] h-[13px] mt-[2px] rounded-t-[10px] bg-white" />
      </div>
      <div className="w-[294px] bg-[linear-gradient(to_right,#0a0a0a_256px,#6e6e6e_256px)] flex items-center">
        <svg className="ml-[12px] shrink-0" width="22" height="30" viewBox="0 0 22 30">
          <rect x="6" y="1" width="10" height="19" rx="5" fill="#e8e8e8" />
          <path d="M2 13 C2 25 20 25 20 13 M11 23 V29" fill="none" stroke="#e8e8e8" strokeWidth="2" />
        </svg>
        <svg className="ml-[17px] shrink-0" width="26" height="26" viewBox="0 0 26 26">
          <rect x="1" y="1" width="24" height="19" rx="4" fill="#fff" />
          <path d="M8 13 L13 7 L18 13" fill="none" stroke="#111" strokeWidth="2" />
          <rect x="8" y="22" width="10" height="3" fill="#fff" />
        </svg>
        <span className="ml-[12px] text-[28px] leading-none whitespace-nowrap" style={{ fontFamily: '"Noto Sans CJK SC", sans-serif' }}>
          王瑞聪正在共享
        </span>
      </div>
    </div>
  );
}

export default function App() {
  return (
    <div className="w-[3024px] h-[1964px] relative overflow-hidden bg-gradient-to-b from-[#3d0d92] via-[#170a4a] to-[#07041c]">
      <MenuBar />
      <div className="h-[19px] bg-[linear-gradient(to_right,#3a1085_0px,#3a1085_20px,#4f1b7e_30px,#541c7a_435px,#7a1c75_445px,#7a1c75_685px,#3a3cc8_695px,#2f18b0_1000px,#2a12a2_1640px,#2e1398_2340px,#2b0e8a_3024px)]" />
      <div className="ml-[17px] w-[2991px] h-[1856px] rounded-t-[26px] rounded-b-[22px] border border-[#4a4a4a] border-t-[3px] border-t-[#626262] overflow-hidden flex flex-col bg-[#1e1e1e]">
        <TitleBar />
        <div className="h-[1776px] flex shrink-0">
          <div className="w-[310px] bg-[#1e1e1e]" />
          <Doc />
          <div className="flex-1 bg-[#1e1e1e]" />
        </div>
      </div>
      <div className="h-[16px] bg-[linear-gradient(to_right,#07041c_0px,#08041e_900px,#15083a_1900px,#2e0a48_2040px,#1c0a40_2500px,#0e0636_3024px)]" />
      <DrawToolbar />
      <RightToolbar />
      <Popover />
      <Badge />
      <div className="absolute left-[355px] top-[215px] w-[86px] h-[88px] rounded-[14px] bg-white shadow-[0_10px_34px_rgba(40,40,60,0.10)] z-10 flex items-center justify-center">
        <ArrowLeft size={40} strokeWidth={1.8} className="text-[#4a5568]" />
      </div>
    </div>
  );
}
